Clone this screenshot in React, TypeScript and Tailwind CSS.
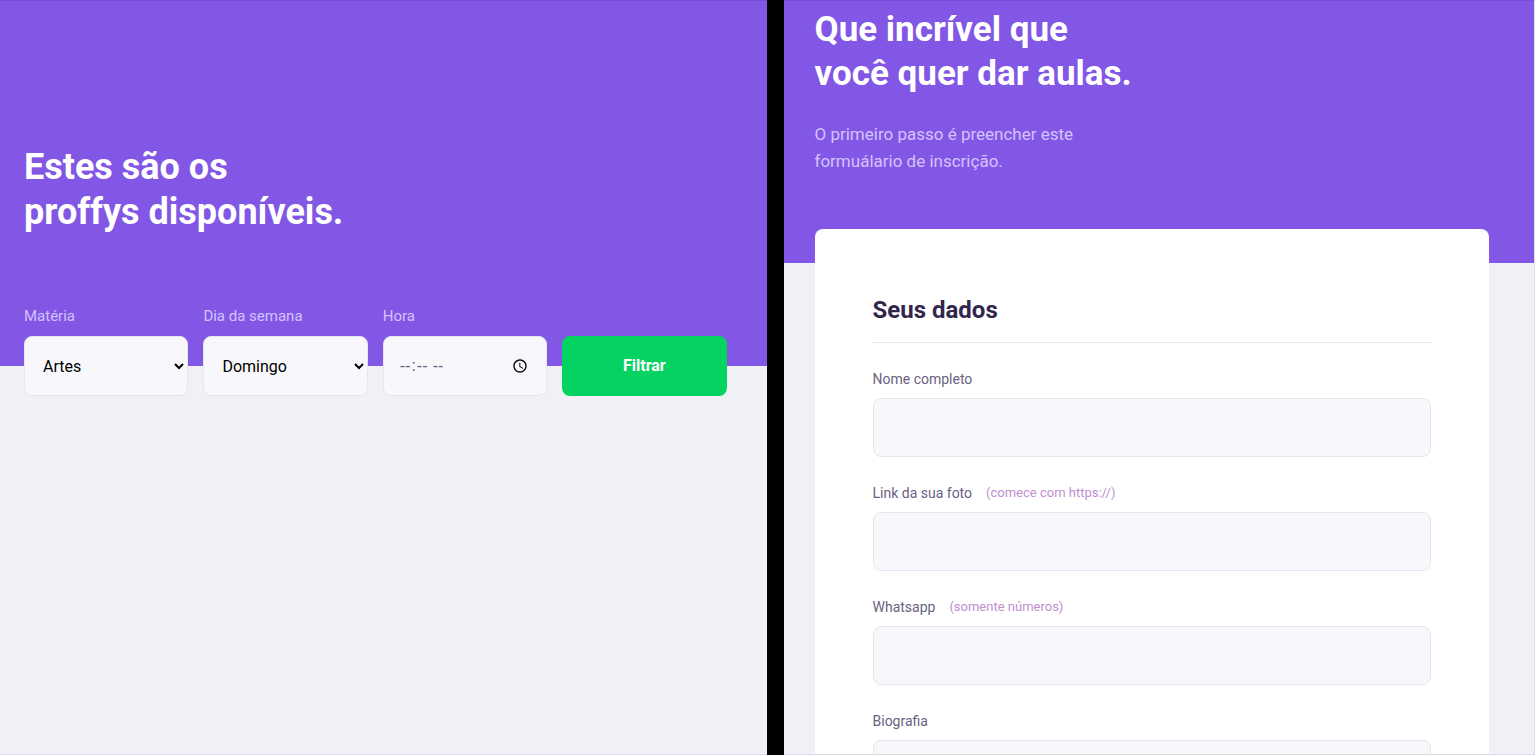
import type { ReactNode } from 'react';

function FilterField({ id, label, children }: { id: string; label: string; children: ReactNode }) {
  return (
    <div className="flex min-w-0 flex-col gap-2">
      <label htmlFor={id} className="text-[15px] leading-6 text-[#d4c2ff]">
        {label}
      </label>
      {children}
    </div>
  );
}

const control = 'h-[60px] w-full rounded-lg border border-[#e6e6f0] bg-[#f8f8fc] text-base';

function TeacherSearch() {
  return (
    <section className="min-w-0 flex-[767] overflow-hidden border-b border-[#dcdce2] bg-[#f0f0f7]">
      <header className="flex flex-col border-t border-[#774ed2] bg-[#8257e5] pt-36 pr-10 pl-6">
        <h1 className="text-4xl leading-[45px] font-bold text-white">
          Estes são os
          <br />
          proffys disponíveis.
        </h1>
        <form className="-mb-[30px] grid grid-cols-4 items-end gap-[15px] pt-[69px]" onSubmit={(e) => e.preventDefault()}>
          <FilterField id="subject" label="Matéria">
            <select id="subject" className={`${control} pr-[2px] pl-[14px] text-black`}>
              <option>Artes</option>
              <option>Biologia</option>
              <option>Matemática</option>
            </select>
          </FilterField>
          <FilterField id="weekday" label="Dia da semana">
            <select id="weekday" className={`${control} pr-[2px] pl-[14px] text-black`}>
              <option>Domingo</option>
              <option>Segunda-feira</option>
              <option>Terça-feira</option>
            </select>
          </FilterField>
          <FilterField id="time" label="Hora">
            <input
              id="time"
              type="time"
              className={`${control} pr-[14px] pl-[15px] font-['Liberation_Sans',Arial,sans-serif] text-[#6a6180]`}
            />
          </FilterField>
          <button type="submit" className="h-[60px] rounded-lg bg-[#04d361] text-base font-bold text-white">
            Filtrar
          </button>
        </form>
      </header>
    </section>
  );
}

function TextField({ id, label, hint, multiline }: { id: string; label: string; hint?: string; multiline?: boolean }) {
  const box = 'block w-full rounded-lg border border-[#e6e6f0] bg-[#f8f8fc] px-4 text-base';
  return (
    <div className="mt-6">
      <label htmlFor={id} className="mb-[7px] flex h-6 items-center gap-[14px] text-sm text-[#6a6180]">
        {label}
        {hint && <span className="text-[13px] text-[#c08fd0]">{hint}</span>}
      </label>
      {multiline ? (
        <textarea id={id} className={`${box} h-40 resize-none py-4`} />
      ) : (
        <input id={id} type="text" className={`${box} h-[59px]`} />
      )}
    </div>
  );
}

function TeacherForm() {
  return (
    <section className="min-w-0 flex-[751] overflow-hidden border-r border-b border-[#dcdce2] bg-[#f0f0f7]">
      <header className="border-t border-[#774ed2] bg-[#8257e5] pt-[7px] pr-[46px] pb-[88px] pl-[31px]">
        <h1 className="text-[35px] leading-[44px] font-bold text-white">
          Que incrível que
          <br />
          você quer dar aulas.
        </h1>
        <p className="pt-[25px] text-[17px] leading-[27px] text-[#d4c2ff]">
          O primeiro passo é preencher este
          <br />
          formuálario de inscrição.
        </p>
      </header>
      <main className="-mt-[34px] mr-[45px] ml-[31px] rounded-t-lg bg-white px-[58px] pt-16 pb-16">
        <form>
          <h2 className="border-b border-[#e6e6f0] pb-[14px] text-2xl leading-[35px] font-bold text-[#32264d]">
            Seus dados
          </h2>
          <TextField id="name" label="Nome completo" />
          <TextField id="avatar" label="Link da sua foto" hint="(comece com https://)" />
          <TextField id="whatsapp" label="Whatsapp" hint="(somente números)" />
          <TextField id="bio" label="Biografia" multiline />
        </form>
      </main>
    </section>
  );
}

export default function App() {
  return (
    <div className="flex h-screen gap-[17px] overflow-hidden bg-black font-[Roboto,'Open_Sans',sans-serif]">
      <TeacherSearch />
      <TeacherForm />
    </div>
  );
}
